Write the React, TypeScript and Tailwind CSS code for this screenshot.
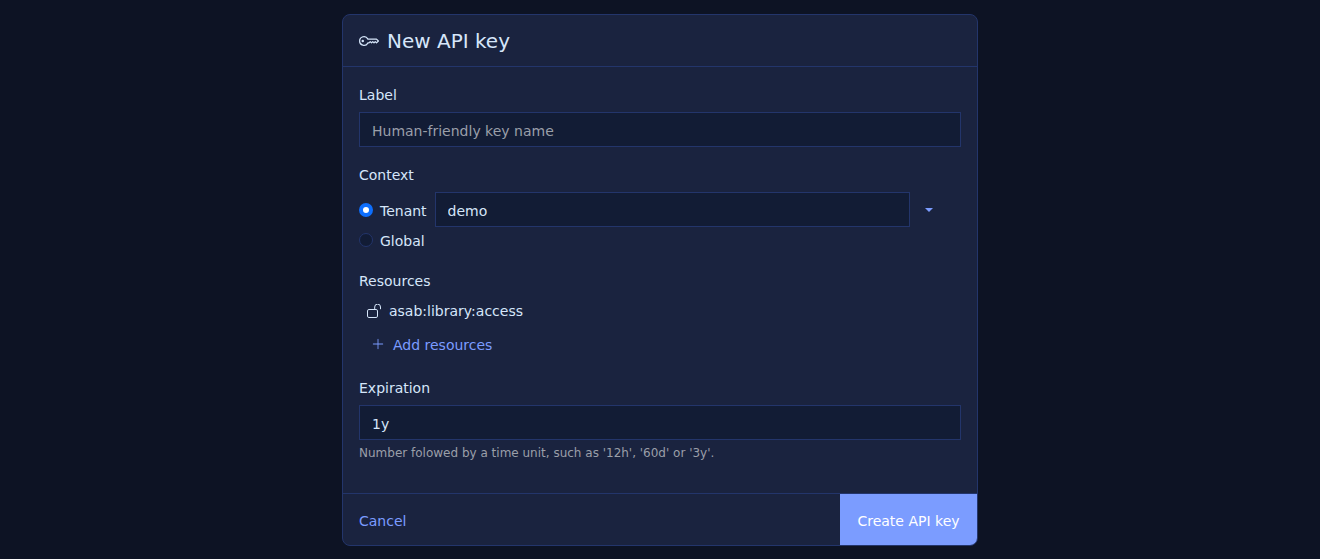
import { useState } from "react";
import { BsKey, BsPlusLg } from "react-icons/bs";

const field =
  "h-[35px] w-full min-w-0 border border-[#23356b] bg-[#121c35] px-3 pt-[2px] text-sm text-[#d6e6fa] outline-none placeholder:text-[#9a9fa9]";
const radio =
  "m-0 size-[14px] shrink-0 appearance-none rounded-full border border-[#23356b] bg-[#121c35] checked:border-[4px] checked:border-[#0d6efd] checked:bg-white";

function UnlockIcon() {
  return (
    <svg viewBox="0 0 14 14" className="size-[14px] fill-none stroke-current" aria-hidden="true">
      <rect x="0.5" y="5.5" width="10" height="8" rx="1.4" />
      <path d="M7.7 5.5V3a2.4 2.4 0 0 1 5.8 0v2.2" />
    </svg>
  );
}

export default function App() {
  const [context, setContext] = useState("tenant");

  return (
    <main className="min-h-screen bg-[#0d1324] px-4 pt-[14px] pb-3 font-['DejaVu_Sans',sans-serif] text-sm leading-[21px] text-[#d6e6fa]">
      <form
        onSubmit={(e) => e.preventDefault()}
        className="mx-auto w-full max-w-[636px] overflow-hidden rounded-lg border border-[#23356b] bg-[#1a233f]"
      >
        <header className="flex h-[52px] items-center gap-2 border-b border-[#23356b] px-4">
          <BsKey className="size-5" aria-hidden="true" />
          <h1 className="text-xl leading-6">New API key</h1>
        </header>

        <div className="flex flex-col gap-4 px-4 pt-4 pb-[31px]">
          <div className="flex flex-col gap-[5px]">
            <label htmlFor="label" className="leading-6">Label</label>
            <input id="label" type="text" placeholder="Human-friendly key name" className={field} />
          </div>

          <fieldset>
            <legend className="mb-[5px] leading-6">Context</legend>
            <div className="flex items-center gap-2 pr-[14px]">
              <label className="flex items-center gap-[7px]">
                <input
                  type="radio"
                  name="context"
                  checked={context === "tenant"}
                  onChange={() => setContext("tenant")}
                  className={radio}
                />
                <span className="pt-1">Tenant</span>
              </label>
              <div className="flex min-w-0 flex-1">
                <input type="text" aria-label="Tenant name" defaultValue="demo" className={field} />
                <button type="button" aria-label="Choose tenant" className="flex w-[37px] shrink-0 items-center justify-center">
                  <svg viewBox="0 0 8 4" className="h-1 w-2 fill-[#7b9cff]" aria-hidden="true">
                    <path d="M0 0h8L4 4z" />
                  </svg>
                </button>
              </div>
            </div>
            <label className="flex w-fit items-center gap-[7px]">
              <input
                type="radio"
                name="context"
                checked={context === "global"}
                onChange={() => setContext("global")}
                className={radio}
              />
              <span className="pt-1">Global</span>
            </label>
          </fieldset>

          <section className="pt-px">
            <h2 className="leading-6">Resources</h2>
            <ul className="mt-[6px]">
              <li className="flex items-center gap-2 px-2">
                <UnlockIcon />
                <span className="pt-[2px]">asab:library:access</span>
              </li>
            </ul>
            <button type="button" className="mt-[6px] flex h-8 items-center gap-2 px-3 text-[#7b9cff]">
              <BsPlusLg className="size-[14px]" aria-hidden="true" />
              <span className="pt-[2px]">Add resources</span>
            </button>
          </section>

          <div className="flex flex-col gap-[5px]">
            <label htmlFor="expiration" className="leading-6">Expiration</label>
            <input id="expiration" type="text" defaultValue="1y" aria-describedby="hint" className={field} />
            <p id="hint" className="-mt-px text-xs leading-[18px] text-[#9a9fa9]">
              Number folowed by a time unit, such as '12h', '60d' or '3y'.
            </p>
          </div>
        </div>

        <footer className="flex h-[52px] items-stretch justify-between border-t border-[#23356b]">
          <button type="button" className="px-4 pt-1 text-[#7b9cff]">Cancel</button>
          <button type="submit" className="min-w-[137px] bg-[#7b9cff] px-4 pt-1 text-white">Create API key</button>
        </footer>
      </form>
    </main>
  );
}
